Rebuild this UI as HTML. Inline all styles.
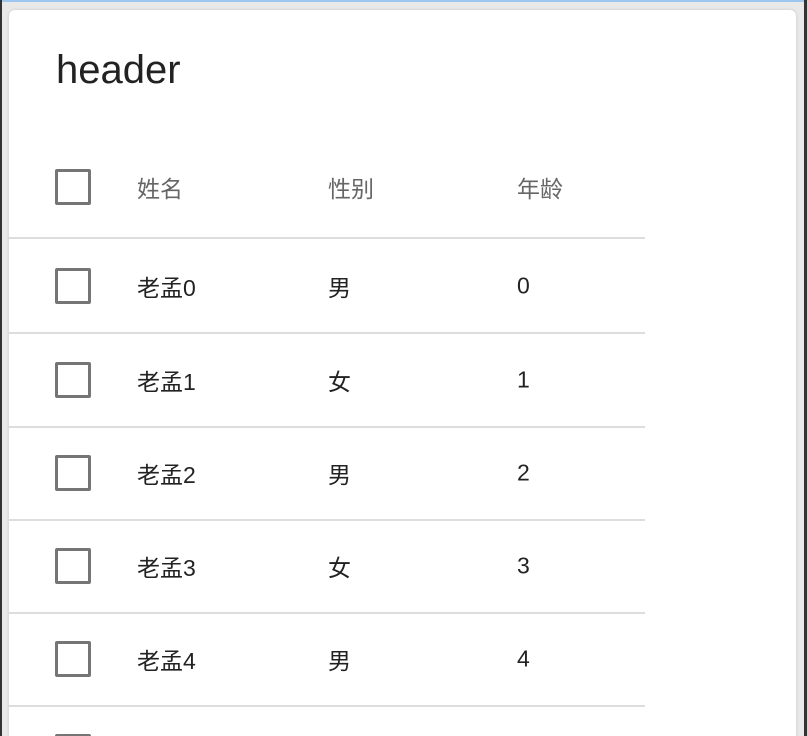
<!DOCTYPE html>
<html style="margin:0;width:807px;height:736px;overflow:hidden"><head><meta charset="utf-8"><style>
body{margin:0;width:807px;height:736px;overflow:hidden;background:#e9e9e9;position:relative;font-family:"Liberation Sans","Noto Sans CJK SC",sans-serif;}
.lb{position:absolute;left:0;top:0;width:2px;height:736px;background:#333;z-index:5}
.rb{position:absolute;right:0;top:0;width:3px;height:736px;background:#333;z-index:5}
.tb{position:absolute;left:0;top:0;width:807px;height:2px;background:#9cc8f0;z-index:5}
.card{position:absolute;left:9px;top:10px;width:787px;height:726px;background:#fff;border-radius:6px 6px 0 0;box-shadow:0 0 3px rgba(0,0,0,.15)}
.h{position:absolute;left:56px;top:48px;font-size:40px;color:#222}
.row{position:absolute;left:9px;width:636px;height:93px}
.row.b{border-bottom:2px solid #ddd}
.cb{position:absolute;left:46px;top:50%;margin-top:-18px;width:30px;height:30px;border:3px solid #757575;border-radius:2px}
.t{position:absolute;top:50%;transform:translateY(-50%);font-size:23px;color:#222}
.hd .t{color:#666}
</style></head><body>
<div class="tb"></div><div class="lb"></div><div class="rb"></div>
<div class="card"></div>
<div class="h">header</div>
<div class="row b hd" style="top:137px;height:100px"><div class="cb"></div><div class="t" style="left:128px">姓名</div><div class="t" style="left:319px">性别</div><div class="t" style="left:508px">年龄</div></div>
<div class="row b" style="top:239px"><div class="cb"></div><div class="t" style="left:128px">老孟0</div><div class="t" style="left:319px">男</div><div class="t" style="left:508px">0</div></div>
<div class="row b" style="top:333px"><div class="cb"></div><div class="t" style="left:128px">老孟1</div><div class="t" style="left:319px">女</div><div class="t" style="left:508px">1</div></div>
<div class="row b" style="top:426px"><div class="cb"></div><div class="t" style="left:128px">老孟2</div><div class="t" style="left:319px">男</div><div class="t" style="left:508px">2</div></div>
<div class="row b" style="top:519px"><div class="cb"></div><div class="t" style="left:128px">老孟3</div><div class="t" style="left:319px">女</div><div class="t" style="left:508px">3</div></div>
<div class="row b" style="top:612px"><div class="cb"></div><div class="t" style="left:128px">老孟4</div><div class="t" style="left:319px">男</div><div class="t" style="left:508px">4</div></div>
<div class="row" style="top:706px;height:30px;overflow:hidden"><div class="cb" style="top:28px;margin-top:0"></div></div>
</body></html>
